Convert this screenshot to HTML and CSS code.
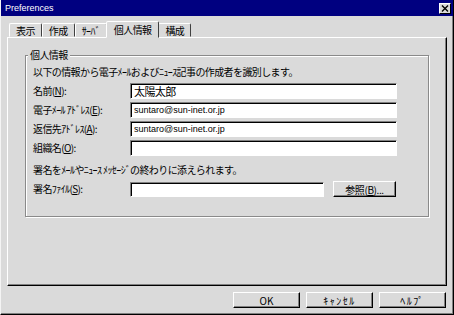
FILE: index.html
```html
<!DOCTYPE html>
<html lang="ja">
<head>
    <meta charset="UTF-8">
    <title>Preferences</title>
    <link rel="stylesheet" href="styles.css">
</head>
<body>
    <div class="window">
        <div class="titlebar">
            <span class="title">Preferences</span>
            <span class="close">
                <svg width="8" height="7" viewBox="0 0 8 7"><path d="M1 0.5L7 6.5M7 0.5L1 6.5" stroke="#000" stroke-width="1.4"/></svg>
            </span>
        </div>
        <div class="tabs">
            <div class="tab">表示</div>
            <div class="tab">作成</div>
            <div class="tab">ｻｰﾊﾞ</div>
            <div class="tab active">個人情報</div>
            <div class="tab">構成</div>
        </div>
        <div class="panel">
            <fieldset class="group">
                <legend>個人情報</legend>
                <p class="note">以下の情報から電子ﾒｰﾙおよびﾆｭｰｽ記事の作成者を識別します。</p>
                <div class="fields">
                    <label>名前(<u>N</u>):</label>
                    <input class="field name" value="太陽太郎">
                    <label>電子ﾒｰﾙ ｱﾄﾞﾚｽ(<u>E</u>):</label>
                    <input class="field" value="suntaro@sun-inet.or.jp">
                    <label>返信先ｱﾄﾞﾚｽ(<u>A</u>):</label>
                    <input class="field" value="suntaro@sun-inet.or.jp">
                    <label>組織名(<u>O</u>):</label>
                    <input class="field" value="">
                </div>
                <p class="note sig">署名をﾒｰﾙやﾆｭｰｽ ﾒｯｾｰｼﾞの終わりに添えられます。</p>
                <div class="file-row">
                    <label>署名ﾌｧｲﾙ(<u>S</u>):</label>
                    <input class="field short" value="">
                    <button class="btn browse">参照(<u>B</u>)...</button>
                </div>
            </fieldset>
        </div>
        <div class="actions">
            <button class="btn ok">OK</button>
            <button class="btn">ｷｬﾝｾﾙ</button>
            <button class="btn">ﾍﾙﾌﾟ</button>
        </div>
    </div>
</body>
</html>
```

FILE: styles.css
```css
* {
    box-sizing: border-box;
}
body {
    margin: 0;
    font-family: "Noto Sans CJK JP", sans-serif;
    font-size: 10px;
    letter-spacing: -0.6px;
    color: #000;
    background: #dadada;
}
.window {
    width: 454px;
    height: 315px;
    background: #dadada;
    border-left: 1px solid #f4f4f4;
    border-right: 1px solid #000;
    border-bottom: 1px solid #000;
    box-shadow: inset -1px -1px 0 #808080;
    display: flex;
    flex-direction: column;
}
.titlebar {
    height: 16px;
    background: #000080;
    color: #fff;
    display: flex;
    align-items: center;
    justify-content: space-between;
    padding: 0 2px 0 4px;
}
.title {
    font-family: "Liberation Sans", Arial, sans-serif;
    font-size: 9px;
    letter-spacing: 0;
}
.close {
    width: 12px;
    height: 11px;
    background: #dadada;
    border: 1px solid;
    border-color: #fff #000 #000 #fff;
    display: flex;
    align-items: center;
    justify-content: center;
}
.tabs {
    margin-top: 5px;
    height: 16px;
    padding-left: 8px;
    display: flex;
    align-items: flex-end;
}
.tab {
    height: 14px;
    line-height: 14px;
    padding: 0 6px;
    border: 1px solid;
    border-color: #fff #404040 transparent #fff;
    border-radius: 2px 2px 0 0;
}
.tab.active {
    height: 17px;
    line-height: 16px;
    margin: 0 -1px -1px -1px;
    padding: 0 7px;
    background: #dadada;
    position: relative;
    z-index: 1;
}
.panel {
    height: 249px;
    margin: 0 6px;
    border: 1px solid;
    border-color: #fff #000 #000 #fff;
    box-shadow: inset -1px -1px 0 #808080;
}
.group {
    width: 404px;
    margin: 11px 0 0 17px;
    padding: 5px 7px 19px 7px;
    border: 1px solid #8a8a8a;
    box-shadow: inset 1px 1px 0 #fff, 1px 1px 0 #fff;
}
.group legend {
    padding: 0 2px;
    margin-left: -5px;
    line-height: 12px;
    background: #dadada;
}
.note {
    margin: 0 0 5px;
    line-height: 12px;
}
.note.sig {
    margin-top: 8px;
}
.fields {
    display: grid;
    grid-template-columns: 97px 267px;
    row-gap: 3px;
}
.fields label, .file-row label {
    line-height: 16px;
}
.file-row label {
    width: 97px;
}
.field {
    height: 16px;
    padding: 0 3px;
    border: 1px solid;
    border-color: #808080 #fff #fff #808080;
    box-shadow: inset 1px 1px 0 #000;
    background: #fff;
    font-family: "Liberation Sans", Arial, sans-serif;
    font-size: 9px;
    letter-spacing: 0;
    outline: none;
}
.field.name {
    font-family: "Noto Sans CJK JP", sans-serif;
    font-size: 11px;
    letter-spacing: -0.6px;
}
.file-row {
    display: flex;
    align-items: center;
}
.field.short {
    width: 194px;
    height: 15px;
}
.btn {
    height: 16px;
    padding: 0;
    background: #dadada;
    border: 1px solid;
    border-color: #fff #000 #000 #fff;
    box-shadow: inset -1px -1px 0 #808080;
    font-family: "Noto Sans CJK JP", sans-serif;
    font-size: 10px;
    letter-spacing: 0;
    color: #000;
}
.btn.browse {
    width: 63px;
    margin-left: 9px;
    letter-spacing: -0.4px;
}
.actions {
    display: flex;
    justify-content: flex-end;
    gap: 6px;
    padding: 6px 7px 0 0;
}
.actions .btn {
    width: 67px;
    letter-spacing: 1.5px;
}
.actions .btn.ok {
    letter-spacing: 0;
}
```
